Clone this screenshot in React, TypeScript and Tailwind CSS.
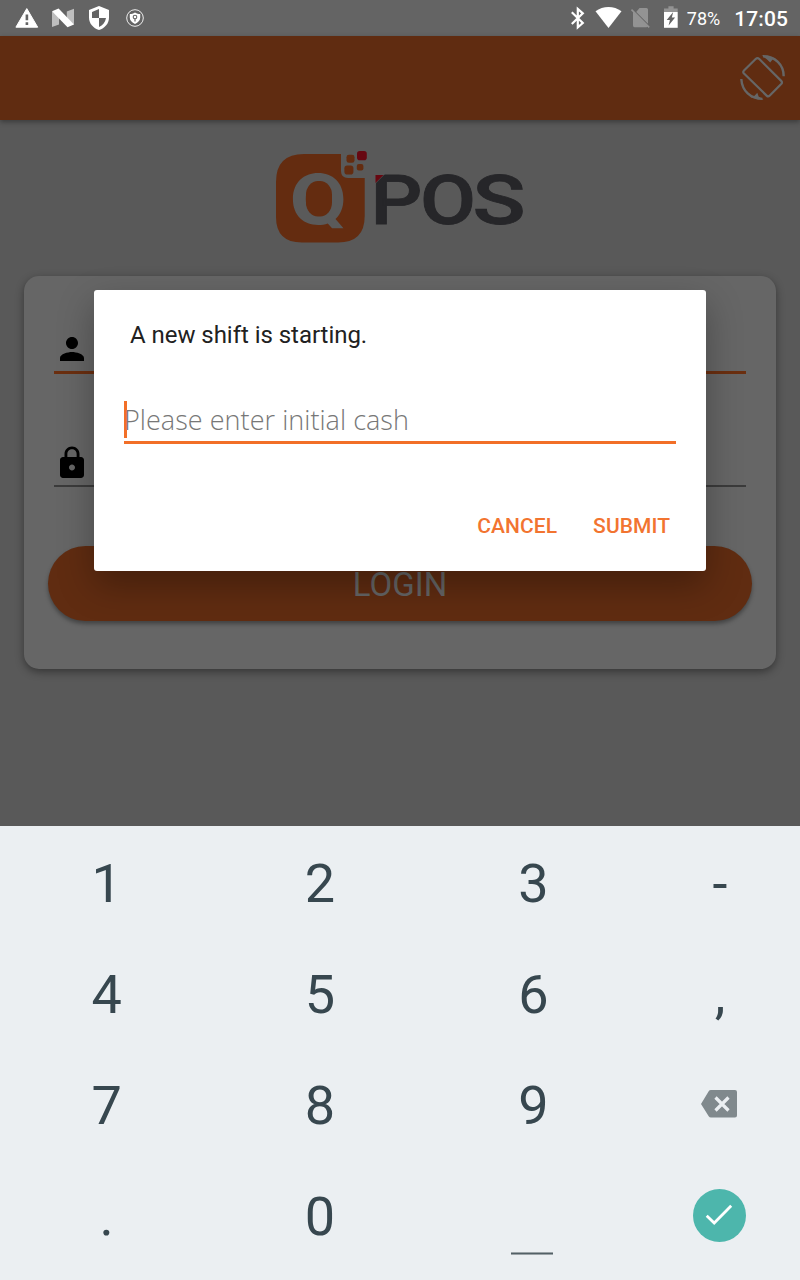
import React from "react";

function NotificationIcons() {
  return (
    <svg className="h-9 w-40" viewBox="0 0 160 36">
      <path d="M26.8 8.6 37.7 27.2H15.9Z" fill="#fff" stroke="#fff" strokeWidth="1" strokeLinejoin="round" />
      <path d="M25.6 14.5h2.6v5.8h-2.6zM25.6 22.3h2.6v2.6h-2.6z" fill="#646464" />
      <path d="M52 11.6 59 15V24.6L52 27ZM66.8 11.4 74 8.8V24.8L66.8 19.5Z" fill="#bebebe" />
      <path d="M52 11.3 58.6 8.6 74 24.4 67.5 27.2Z" fill="#fff" />
      <path d="M99 6 109 10V17.5C109 23.6 104.8 28.2 99 30 93.2 28.2 89 23.6 89 17.5V10Z" fill="#fff" />
      <path d="M99 9V18H92V12ZM99 18H106C105.3 22.3 102.8 25.4 99 27Z" fill="#646464" />
      <circle cx="135" cy="18" r="8.3" fill="none" stroke="#eee" strokeWidth="1" />
      <path d="M135 12.5C136.8 13.6 138.4 14 140.2 14V17.8C140.2 20.5 138 22.6 135 23.9 132 22.6 129.8 20.5 129.8 17.8V14C131.6 14 133.2 13.6 135 12.5Z" fill="#fff" />
      <circle cx="135" cy="17" r="1.8" fill="#fff" stroke="#646464" strokeWidth="1.1" />
      <path d="M135 18.7V21.5" stroke="#646464" strokeWidth="1.2" />
    </svg>
  );
}

function SystemIcons() {
  return (
    <svg className="h-9 w-[120px]" viewBox="564 0 120 36">
      <path d="M571.8 12.3 582.8 23 577.8 27.4V9L582.8 13.3 571.8 24" fill="none" stroke="#fff" strokeWidth="2.2" />
      <path d="M595.5 11.3C603 5.5 614 5.5 621.5 11.3L608.5 28Z" fill="#fff" />
      <path d="M639.5 8H646.4Q648 8 648 9.6V23.8L636.2 12ZM633 11.500 648 26.500 646.500 27.200H634.6Q633 27.2 633 25.6Z" fill="#939393" />
      <path d="M631.5 9.6 649.2 27.4" stroke="#939393" strokeWidth="1.6" />
      <path d="M668.4 6.3H673.6V8.6H677.7V12H664V8.6H668.4Z" fill="#939393" />
      <path d="M664 12H677.7V27.8H664Z" fill="#fff" />
      <path d="M673.2 12 671.8 17.4H675.1L668.6 25.4 669.9 20H666.7Z" fill="#646464" />
    </svg>
  );
}

function StatusBar() {
  return (
    <div className="flex h-9 shrink-0 items-center bg-[#646464] text-white">
      <NotificationIcons />
      <div className="ml-auto flex items-center pr-3">
        <SystemIcons />
        <span className="ml-[3px] mt-0.5 text-[18px] leading-6">78%</span>
        <span className="ml-3.5 mt-0.5 text-[21px] font-medium leading-6 tracking-[0.1px]">17:05</span>
      </div>
    </div>
  );
}

function AppBar() {
  return (
    <header className="relative flex h-[84px] shrink-0 items-center justify-end bg-[#602c11] pb-0.5 pr-3 shadow-[0_2px_5px_rgba(0,0,0,0.35)]">
      <svg className="h-[52px] w-[52px]" viewBox="736 51 52 52" fill="none" stroke="#666">
        <path d="M755.9 58.8Q757.5 57.4 759.1 58.8L781.2 80.9Q782.7 82.4 781.2 84L769.8 95.6Q768.2 97.2 766.6 95.6L744 73.6Q742.5 72 744 70.4Z" strokeWidth="2.2" />
        <path d="M763 56.2C775 56.2 783.7 64.5 783.7 76.2M741.3 79C742.1 91 750.5 98.9 762.5 98.9" strokeWidth="2.4" />
        <path d="M761.5 55.3 774 57.7 770.2 62.6 766.8 59.2ZM763.5 99.7 750.5 97.5 754.5 95.8 757.3 92.8 758.6 96.5Z" fill="#666" stroke="none" />
      </svg>
    </header>
  );
}

function Logo() {
  return (
    <svg className="h-[110px] w-[270px]" viewBox="265 140 270 110">
      <path d="M304 154H341V171Q341 178 348 178H364.7V216Q364.7 242.5 338 242.5H302Q276 242.5 276 217V182Q276 154 304 154Z" fill="#642c10" />
      <rect x="346.5" y="154.8" width="8" height="8" rx="2.4" fill="#642c10" />
      <rect x="344.4" y="165.5" width="9" height="9" rx="2.8" fill="#642c10" />
      <rect x="356.8" y="164" width="6.6" height="6.6" rx="2" fill="#642c10" />
      <rect x="357" y="151" width="9.8" height="9.2" rx="2.8" fill="#670711" />
      <text x="290" y="223.500" fontFamily="Inter, sans-serif" fontSize="69" fontWeight="800" fill="#5a5a5a" textLength="57" lengthAdjust="spacingAndGlyphs">Q</text>
      <rect x="306" y="181" width="26" height="35.500" rx="12" ry="14" fill="#642c10" />
      <g fontFamily="Roboto, sans-serif" fontSize="69" fontWeight="500" fill="#262629" stroke="#262629" strokeWidth="0.8">
        <text x="370.500" y="224" textLength="52" lengthAdjust="spacingAndGlyphs">P</text>
        <text x="420" y="224" textLength="56" lengthAdjust="spacingAndGlyphs">O</text>
        <text x="472.500" y="224" textLength="53" lengthAdjust="spacingAndGlyphs">S</text>
      </g>
      <path d="M374 173H386L374 185Z" fill="#595959" />
      <path d="M375.500 175H383.5L375.500 183Z" fill="#670711" />
    </svg>
  );
}

function LoginCard() {
  return (
    <section className="mx-6 mt-[26px] flex h-[393px] flex-col rounded-[15px] bg-[#666] px-6 shadow-[0_3px_9px_rgba(0,0,0,0.4)]">
      <div className="mx-1.5 flex h-[98px] items-end border-b-[3px] border-[#6b2f10] pb-1">
        <svg className="h-9 w-9" viewBox="0 0 24 24">
          <path d="M12 12c2.21 0 4-1.79 4-4s-1.79-4-4-4-4 1.790-4 4 1.790 4 4 4zm0 2c-2.670 0-8 1.340-8 4v2h16v-2c0-2.660-5.330-4-8-4z" />
        </svg>
      </div>
      <div className="mx-1.5 flex h-[113px] items-end border-b-2 border-[#3b3b3b] pb-1">
        <svg className="h-9 w-9" viewBox="0 0 24 24">
          <path d="M18 8h-1V6c0-2.760-2.240-5-5-5S7 3.240 7 6v2H6c-1.100 0-2 .9-2 2v10c0 1.100.9 2 2 2h12c1.100 0 2-.9 2-2V10c0-1.100-.9-2-2-2zm-6 9c-1.100 0-2-.9-2-2s.9-2 2-2 2 .9 2 2-.9 2-2 2zm3.100-9H8.900V6c0-1.710 1.390-3.100 3.100-3.100s3.100 1.390 3.100 3.100v2z" />
        </svg>
      </div>
      <button className="mt-[59px] flex h-[75px] items-center justify-center rounded-full bg-[#602c11] pt-0.5 text-[33px] text-[#666] shadow-[0_3px_4px_rgba(0,0,0,0.35)]">
        LOGIN
      </button>
    </section>
  );
}

function ShiftDialog() {
  return (
    <div className="absolute inset-x-0 top-[290px] flex justify-center">
      <div role="dialog" className="flex h-[281px] w-[612px] flex-col rounded-[3px] bg-white px-[30px] shadow-[0_14px_36px_rgba(0,0,0,0.3)]">
        <h1 className="ml-1.5 mt-[29px] text-[24px] leading-8 tracking-[-0.04px] text-[#212121]">A new shift is starting.</h1>
        <div className="mt-[50px] flex h-[43px] items-start border-b-[3px] border-[#f26f28]">
          <span className="h-[37px] w-[3px] bg-[#f26f28]" />
          <span className="-ml-[3px] whitespace-nowrap font-['Open_Sans'] text-[27px] font-light leading-[37px] tracking-[0.04px] text-[#777]">
            Please enter initial cash
          </span>
        </div>
        <div className="mr-1.5 mt-[66px] flex justify-end gap-9 text-[21px] font-medium leading-8 text-[#f27430]">
          <button className="tracking-[0.06px]">CANCEL</button>
          <button className="tracking-[0.06px]">SUBMIT</button>
        </div>
      </div>
    </div>
  );
}

const digitRows = [
  ["1", "2", "3", "-"],
  ["4", "5", "6", ","],
  ["7", "8", "9", "backspace"],
  [".", "0", "space", "done"],
];

function KeyFace({ name }: { name: string }) {
  if (name === "backspace") {
    return (
      <svg className="mb-[5px] mr-0.5 h-7 w-9" viewBox="701 1090 36 28">
        <path d="M710 1090H735Q737 1090 737 1092V1115.500Q737 1117.500 735 1117.500H711Q709.500 1117.500 708.700 1116.200L701 1104 708.700 1091.300Q709.300 1090 711 1090Z" fill="#80898d" />
        <path d="M715.500 1097.500 728.500 1110.500M728.500 1097.500 715.500 1110.500" stroke="#ebeff2" strokeWidth="3.200" />
      </svg>
    );
  }
  if (name === "done") {
    return (
      <svg className="mb-1 h-[53px] w-[53px]" viewBox="693 1189 53 53">
        <circle cx="719.500" cy="1215.500" r="26.500" fill="#4db6ac" />
        <path d="M706.700 1215.800 714.200 1223.100 731.200 1205.800" fill="none" stroke="#fff" strokeWidth="2.800" />
      </svg>
    );
  }
  if (name === "space") {
    return <span className="mr-[3px] mt-[71px] h-[3px] w-[42px] border-y border-[#9ba3a7] bg-[#526066]" />;
  }
  return <span className="mb-0.5">{name}</span>;
}

function Keypad() {
  return (
    <div className="grid h-[454px] shrink-0 grid-cols-[4fr_4fr_4fr_3fr] grid-rows-[repeat(4,111px)] bg-[#ebeff2] pt-[3px] text-[54px] leading-none text-[#37474f]">
      {digitRows.flat().map((key) => (
        <button key={key} className="flex items-center justify-center">
          <KeyFace name={key} />
        </button>
      ))}
    </div>
  );
}

export default function App() {
  return (
    <div className="relative flex h-[1280px] w-[800px] flex-col overflow-hidden bg-[#595959] font-[Roboto,sans-serif]">
      <StatusBar />
      <AppBar />
      <main className="flex min-h-0 flex-1 flex-col">
        <div className="flex justify-center pt-5">
          <Logo />
        </div>
        <LoginCard />
      </main>
      <ShiftDialog />
      <Keypad />
    </div>
  );
}
